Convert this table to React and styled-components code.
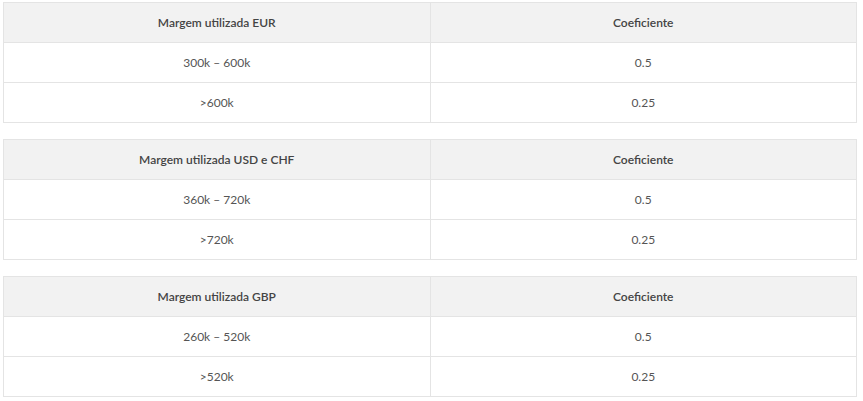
import React from "react";
import styled, { createGlobalStyle } from "styled-components";

const Global = createGlobalStyle`
  html, body { margin: 0; padding: 0; background: #fff; }
  body { font-family: Lato, "Open Sans", sans-serif; }
`;

const Page = styled.div`
  padding: 2px 6px 0 3px;
  display: flex;
  flex-direction: column;
  gap: 16px;
`;

const Table = styled.table`
  width: 100%;
  border-collapse: collapse;
  table-layout: fixed;
  border: 1px solid #e4e4e4;
`;

const Th = styled.th`
  height: 39px;
  padding: 0 8px;
  background: #f2f2f2;
  border: 1px solid #e4e4e4;
  font-size: 12px;
  font-weight: 600;
  color: #444;
  text-align: center;
  vertical-align: middle;
`;

const Td = styled.td`
  height: 39px;
  padding: 0 8px;
  border: 1px solid #e4e4e4;
  font-size: 12px;
  color: #555;
  text-align: center;
  vertical-align: middle;
`;

const data = [
  { title: "Margem utilizada EUR", rows: [["300k – 600k", "0.5"], [">600k", "0.25"]] },
  { title: "Margem utilizada USD e CHF", rows: [["360k – 720k", "0.5"], [">720k", "0.25"]] },
  { title: "Margem utilizada GBP", rows: [["260k – 520k", "0.5"], [">520k", "0.25"]] },
];

export default function App() {
  return (
    <>
      <Global />
      <Page>
        {data.map((t) => (
          <Table key={t.title}>
            <thead>
              <tr>
                <Th>{t.title}</Th>
                <Th>Coeficiente</Th>
              </tr>
            </thead>
            <tbody>
              {t.rows.map((r) => (
                <tr key={r[0]}>
                  <Td>{r[0]}</Td>
                  <Td>{r[1]}</Td>
                </tr>
              ))}
            </tbody>
          </Table>
        ))}
      </Page>
    </>
  );
}
